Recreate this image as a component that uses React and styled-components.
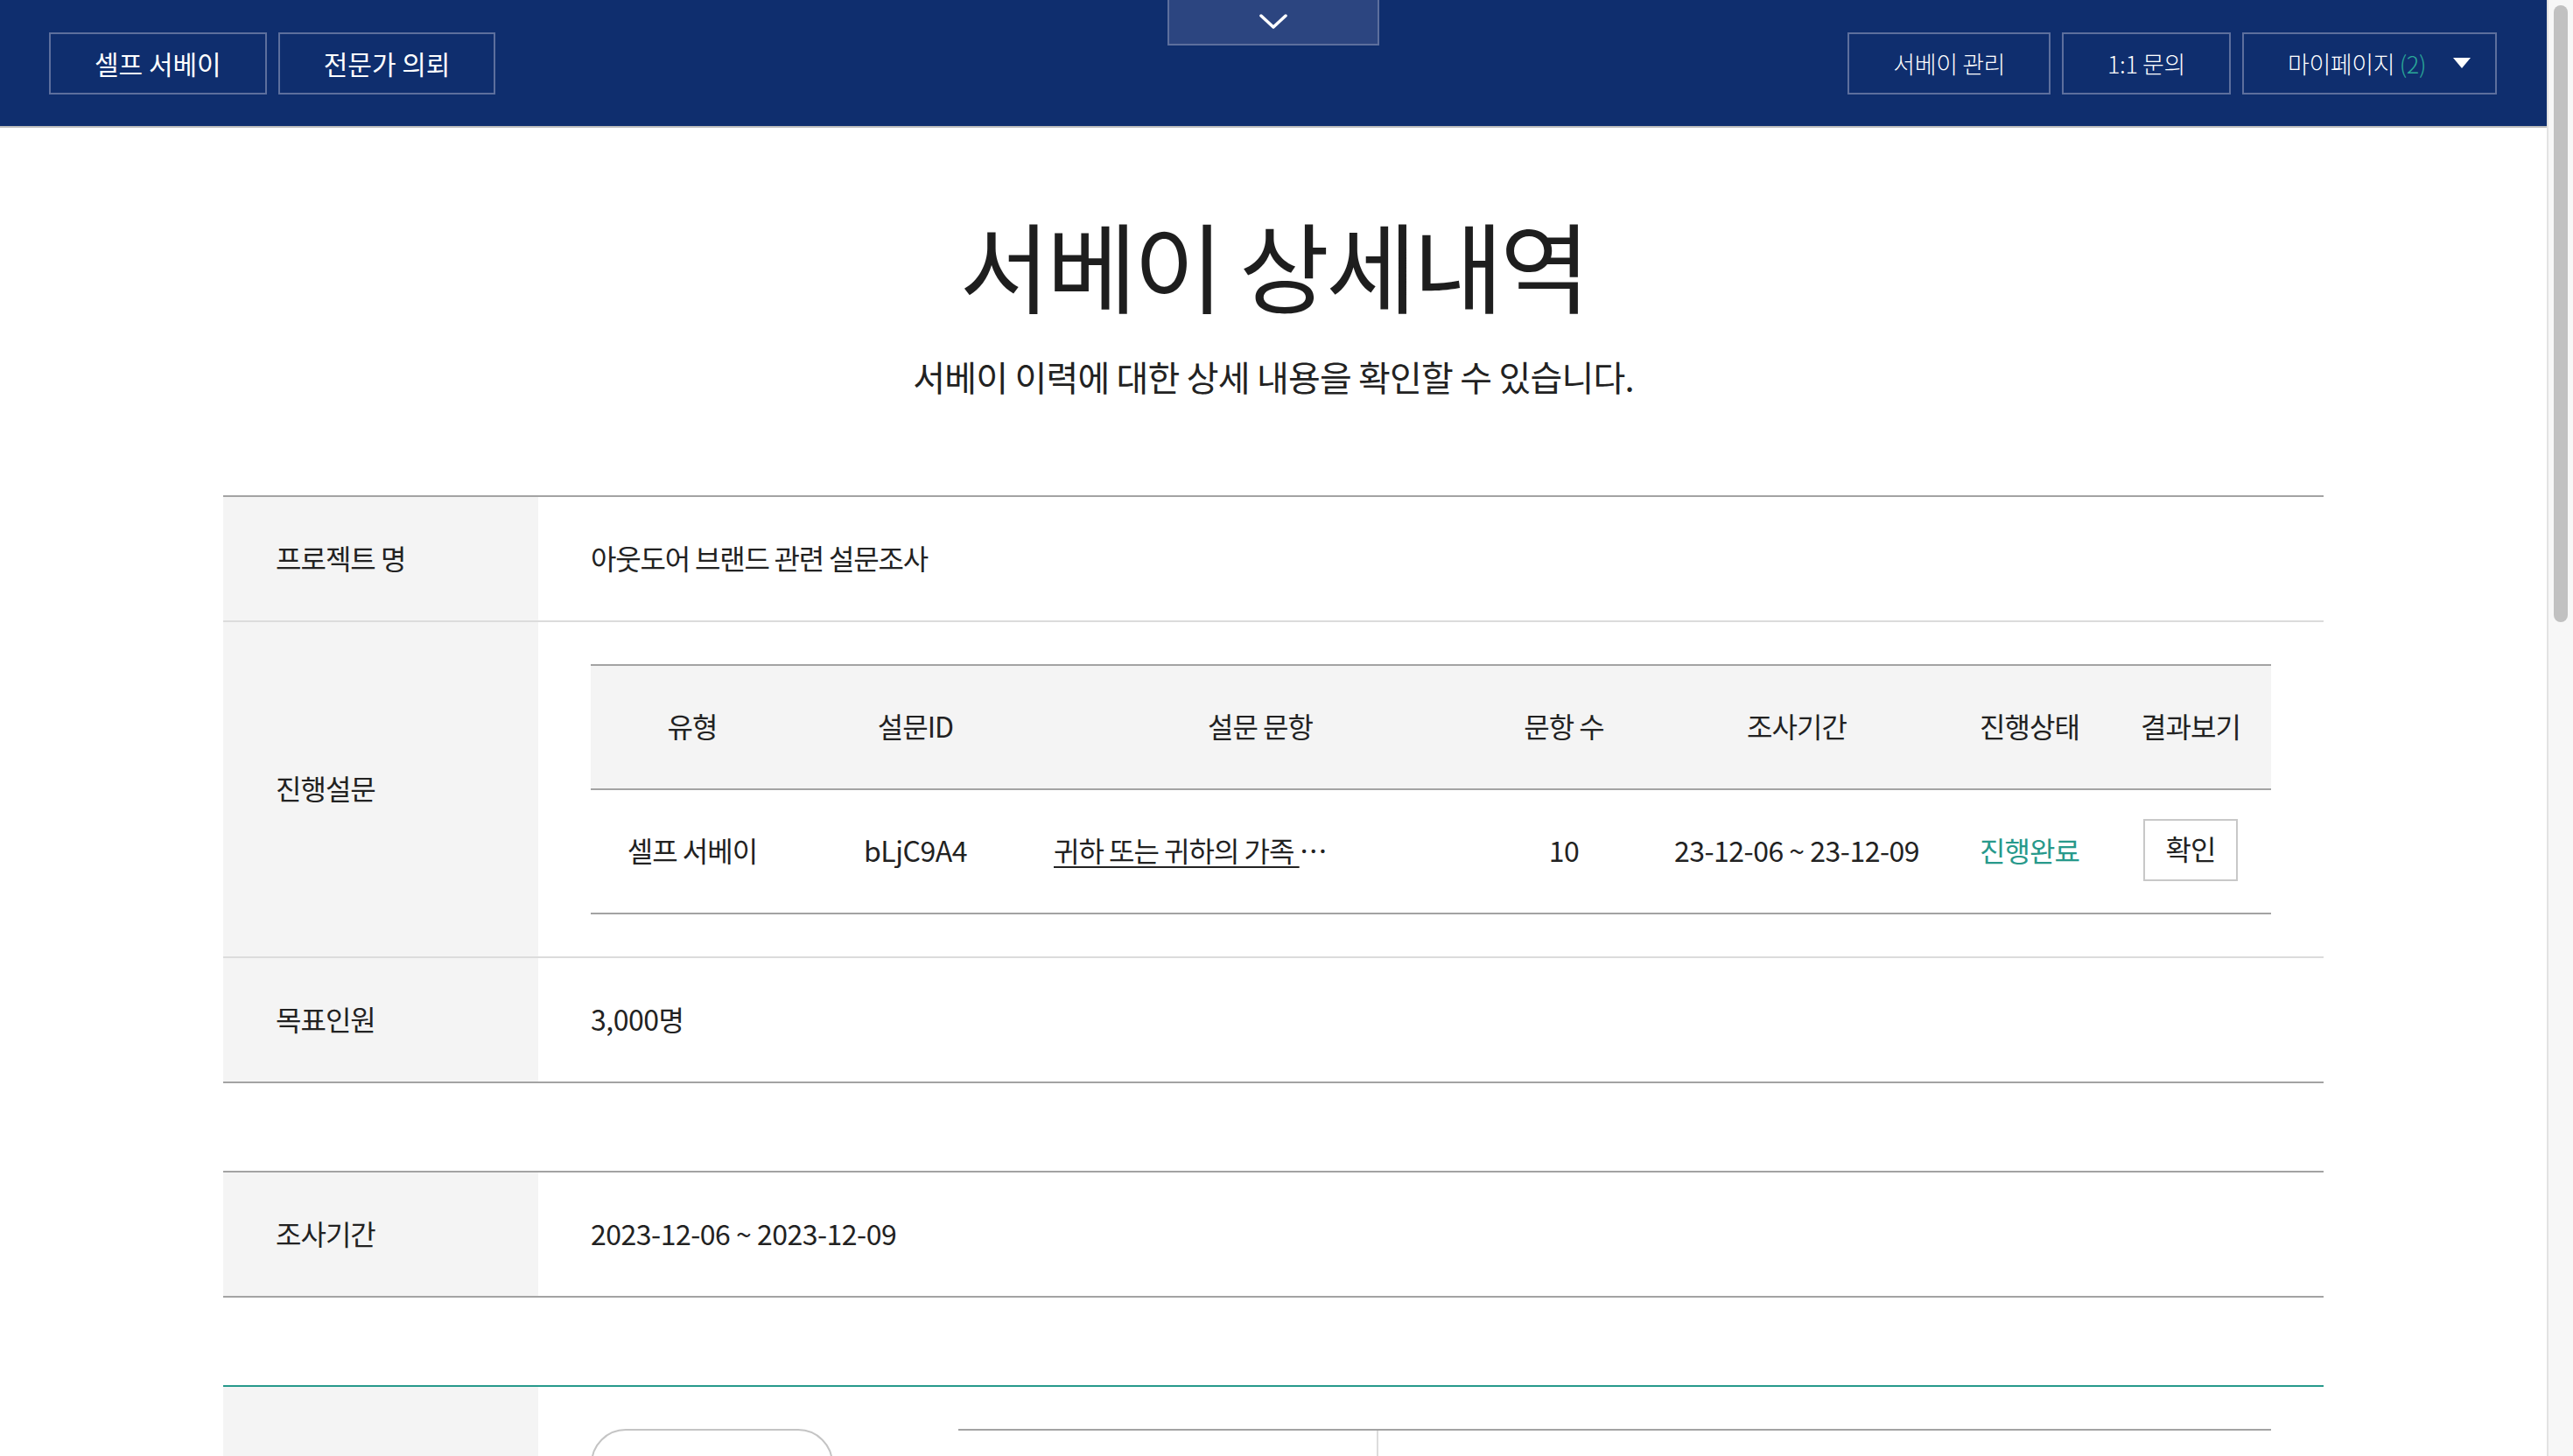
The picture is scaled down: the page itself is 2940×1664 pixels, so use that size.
import React from 'react';
import styled, { createGlobalStyle } from 'styled-components';

const GlobalStyle = createGlobalStyle`
  * { box-sizing: border-box; }
  html, body { overflow: hidden; }
  body {
    margin: 0;
    background: #fff;
    color: #222;
    font-family: "Noto Sans CJK KR", "Noto Sans", sans-serif;
    font-weight: 400;
  }
`;

const Page = styled.div`
  margin-right: 30px;
  min-height: 3862px;
  padding-bottom: 200px;
`;

const ScrollTrack = styled.div`
  position: fixed;
  top: 0;
  right: 0;
  width: 30px;
  height: 100vh;
  background: #f7f7f7;
  border-left: 2px solid #e3e3e3;
  z-index: 10;
`;

const ScrollThumb = styled.div`
  position: absolute;
  top: 6px;
  left: 6px;
  width: 16px;
  height: 705px;
  border-radius: 8px;
  background: #c1c1c1;
`;

const Header = styled.header`
  position: relative;
  height: 146px;
  background: #0f2e6e;
  border-bottom: 2px solid #bdbdbd;
  display: flex;
  align-items: center;
  justify-content: space-between;
  padding: 0 57px 0 56px;
`;

const NavGroup = styled.nav`
  display: flex;
  gap: 13px;
`;

const NavButton = styled.button`
  height: 71px;
  padding: 0 ${p => (p.$dropdown ? '28px' : '50px')} 0 50px;
  border: 2px solid #5d6f9d;
  background: transparent;
  color: #fff;
  font-family: inherit;
  font-size: ${p => (p.$small ? '27px' : '30px')};
  letter-spacing: ${p => (p.$small ? '-0.4px' : '0')};
  font-weight: ${p => (p.$small ? 300 : 400)};
  display: flex;
  align-items: center;
  gap: 31px;
  cursor: pointer;
`;

const Count = styled.span`
  color: #2aa898;
`;

const Caret = styled.span`
  width: 0;
  height: 0;
  border-left: 10px solid transparent;
  border-right: 10px solid transparent;
  border-top: 12px solid #fff;
`;

const MenuToggle = styled.button`
  position: absolute;
  top: 0;
  left: 50%;
  transform: translateX(-50%);
  width: 242px;
  height: 52px;
  background: #2c4580;
  border: 2px solid #5d6f9d;
  border-top: none;
  display: flex;
  align-items: center;
  justify-content: center;
  padding: 0;
  cursor: pointer;
`;

const TitleSection = styled.section`
  padding-top: 99px;
  text-align: center;
`;

const Title = styled.h1`
  margin: 0;
  font-size: 112px;
  line-height: 1;
  font-weight: 400;
  letter-spacing: -3.7px;
  color: #1e1e1e;
`;

const Subtitle = styled.p`
  margin: 53px 0 0;
  font-size: 40px;
  line-height: 1;
  letter-spacing: -0.8px;
  color: #222;
`;

const Content = styled.main`
  width: 2400px;
  margin: 116px auto 0;
`;

const InfoTable = styled.section`
  border-top: 2px solid ${p => (p.$accent ? '#27998b' : '#a3a3a3')};
  margin-top: ${p => (p.$gap ? '100px' : '0')};
`;

const Row = styled.div`
  display: grid;
  grid-template-columns: 360px 1fr;
  border-bottom: 2px solid #dcdcdc;
  &:last-child { border-bottom-color: #a3a3a3; }
`;

const Label = styled.div`
  background: #f4f4f4;
  padding: 0 60px 4px;
  min-height: 141px;
  display: flex;
  align-items: center;
  font-size: 32px;
  letter-spacing: -1px;
`;

const Value = styled.div`
  padding: ${p => (p.$nested ? '48px 60px' : '0 60px 4px')};
  display: flex;
  align-items: center;
  font-size: 32px;
  letter-spacing: ${p => (p.$num ? '-0.5px' : '-1.2px')};
`;

const SurveyGrid = styled.div`
  width: 100%;
  display: grid;
  grid-template-columns: 232px 278px 510px 184px 348px 184px 184px;
  border-top: 2px solid #a3a3a3;
`;

const HeadCell = styled.div`
  height: 142px;
  padding-bottom: 4px;
  background: #f4f4f4;
  border-bottom: 2px solid #a3a3a3;
  display: flex;
  align-items: center;
  justify-content: center;
  font-size: 32px;
  letter-spacing: -1px;
`;

const BodyCell = styled.div`
  height: 142px;
  padding-bottom: 4px;
  border-bottom: 2px solid #a3a3a3;
  display: flex;
  align-items: center;
  justify-content: ${p => (p.$left ? 'flex-start' : 'center')};
  padding-left: ${p => (p.$left ? '19px' : '0')};
  font-size: 32px;
  letter-spacing: ${p => (p.$num ? '-0.5px' : '-1px')};
  color: ${p => (p.$status ? '#27998b' : '#222')};
  white-space: nowrap;
`;

const QuestionText = styled.span`
  white-space: pre;
`;

const QuestionLink = styled.a`
  color: #222;
  text-decoration: underline;
  text-decoration-thickness: 2px;
  text-underline-offset: 5px;
  cursor: pointer;
`;

const Ellipsis = styled.span`
  color: #222;
`;

const ConfirmButton = styled.button`
  width: 108px;
  height: 71px;
  border: 2px solid #c8c8c8;
  background: #fff;
  color: #222;
  font-family: inherit;
  font-weight: 400;
  font-size: 32px;
  letter-spacing: -1px;
  padding: 0 0 4px;
  cursor: pointer;
`;

const ResultLayout = styled.div`
  width: 100%;
  display: flex;
  align-items: flex-start;
  gap: 143px;
`;

const PillButton = styled.button`
  flex: 0 0 277px;
  height: 90px;
  border: 2px solid #c4c4c4;
  border-radius: 40px;
  background: #fff;
  color: #222;
  font-family: inherit;
  font-weight: 400;
  font-size: 32px;
  letter-spacing: -1px;
  cursor: pointer;
`;

const ResultGrid = styled.div`
  flex: 1;
  display: grid;
  grid-template-columns: 478px 1fr;
  border-top: 2px solid #a3a3a3;
`;

const ResultCell = styled.div`
  min-height: 120px;
  padding: 0 40px;
  display: flex;
  align-items: center;
  border-bottom: 2px solid #dcdcdc;
  border-left: ${p => (p.$divided ? '2px solid #dcdcdc' : 'none')};
  font-size: 32px;
  letter-spacing: -1px;
`;

const Chevron = () => (
  <svg width="32" height="18" viewBox="0 0 32 18" fill="none">
    <path d="M2 2 L16 15 L30 2" stroke="#fff" strokeWidth="3.5" strokeLinecap="round" strokeLinejoin="round" />
  </svg>
);

const surveyHead = ['유형', '설문ID', '설문 문항', '문항 수', '조사기간', '진행상태', '결과보기'];

const results = [
  ['문항 1', '귀하 또는 귀하의 가족 중 아웃도어 관련 업종 종사자가 있습니까?'],
  ['문항 2', '최근 1년 내 아웃도어 제품을 구매한 경험이 있습니까?'],
  ['문항 3', '가장 선호하는 아웃도어 브랜드는 무엇입니까?'],
  ['문항 4', '아웃도어 제품 구매 시 가장 중요하게 고려하는 요소는?'],
  ['문항 5', '주로 이용하는 구매 채널은 어디입니까?'],
  ['문항 6', '브랜드 광고를 접한 경로는 무엇입니까?'],
  ['문항 7', '향후 재구매 의향이 있으십니까?'],
];

export default function App() {
  return (
    <>
      <GlobalStyle />
      <Page>
        <Header>
          <NavGroup>
            <NavButton>셀프 서베이</NavButton>
            <NavButton>전문가 의뢰</NavButton>
          </NavGroup>
          <MenuToggle aria-label="메뉴 펼치기">
            <Chevron />
          </MenuToggle>
          <NavGroup>
            <NavButton $small>서베이 관리</NavButton>
            <NavButton $small>1:1 문의</NavButton>
            <NavButton $small $dropdown>
              <span>
                마이페이지 <Count>(2)</Count>
              </span>
              <Caret />
            </NavButton>
          </NavGroup>
        </Header>

        <TitleSection>
          <Title>서베이 상세내역</Title>
          <Subtitle>서베이 이력에 대한 상세 내용을 확인할 수 있습니다.</Subtitle>
        </TitleSection>

        <Content>
          <InfoTable>
            <Row>
              <Label>프로젝트 명</Label>
              <Value>아웃도어 브랜드 관련 설문조사</Value>
            </Row>
            <Row>
              <Label>진행설문</Label>
              <Value $nested>
                <SurveyGrid>
                  {surveyHead.map(h => (
                    <HeadCell key={h}>{h}</HeadCell>
                  ))}
                  <BodyCell>셀프 서베이</BodyCell>
                  <BodyCell $num>bLjC9A4</BodyCell>
                  <BodyCell $left>
                    <QuestionText>
                      <QuestionLink>{'귀하 또는 귀하의 가족 '}</QuestionLink>
                      <Ellipsis>…</Ellipsis>
                    </QuestionText>
                  </BodyCell>
                  <BodyCell $num>10</BodyCell>
                  <BodyCell $num>23-12-06 ~ 23-12-09</BodyCell>
                  <BodyCell $status>진행완료</BodyCell>
                  <BodyCell>
                    <ConfirmButton>확인</ConfirmButton>
                  </BodyCell>
                </SurveyGrid>
              </Value>
            </Row>
            <Row>
              <Label>목표인원</Label>
              <Value $num>3,000명</Value>
            </Row>
          </InfoTable>

          <InfoTable $gap>
            <Row>
              <Label>조사기간</Label>
              <Value $num>2023-12-06 ~ 2023-12-09</Value>
            </Row>
          </InfoTable>

          <InfoTable $gap $accent>
            <Row>
              <Label>응답결과</Label>
              <Value $nested>
                <ResultLayout>
                  <PillButton>시간대별 보기</PillButton>
                  <ResultGrid>
                    <ResultCell>문항</ResultCell>
                    <ResultCell $divided>내용</ResultCell>
                    {results.map(([q, t]) => (
                      <React.Fragment key={q}>
                        <ResultCell>{q}</ResultCell>
                        <ResultCell $divided>{t}</ResultCell>
                      </React.Fragment>
                    ))}
                  </ResultGrid>
                </ResultLayout>
              </Value>
            </Row>
          </InfoTable>
        </Content>
      </Page>
      <ScrollTrack aria-hidden="true">
        <ScrollThumb />
      </ScrollTrack>
    </>
  );
}
